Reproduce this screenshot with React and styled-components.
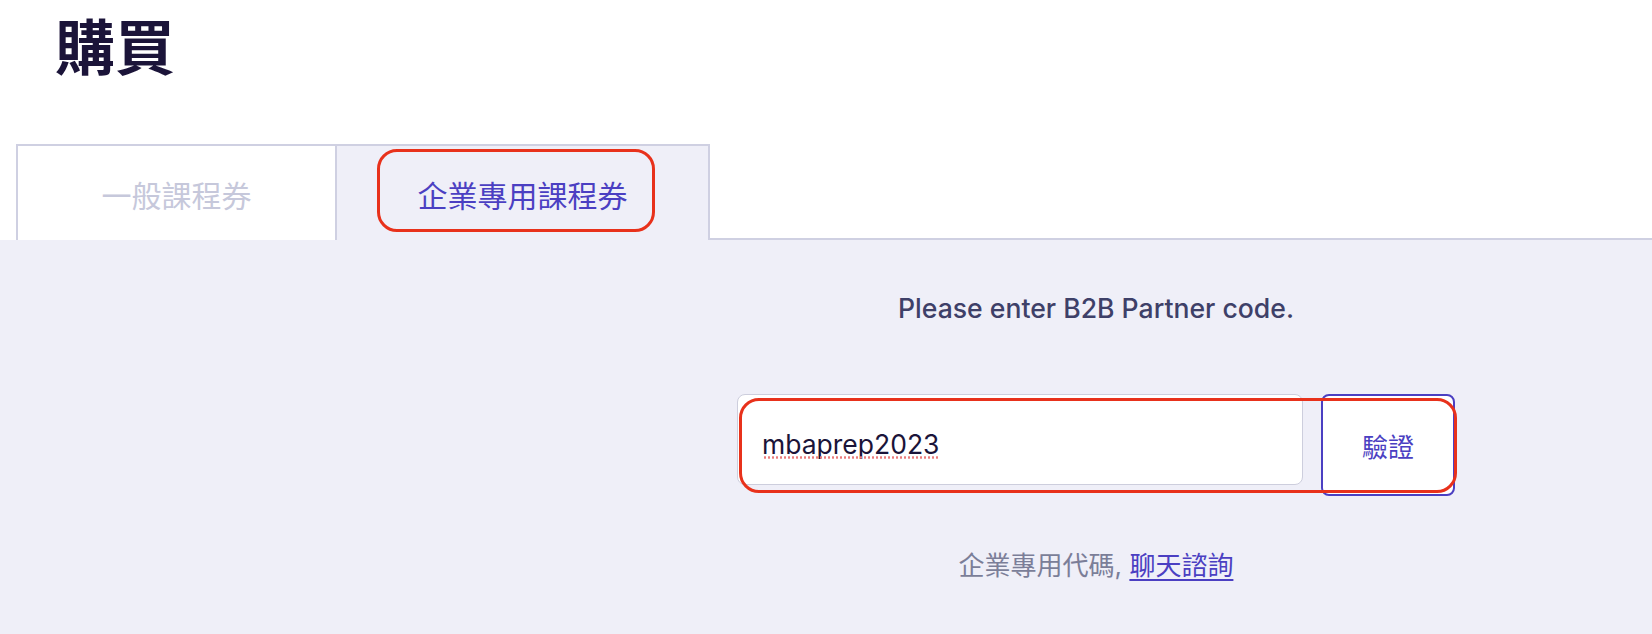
import React from "react";
import styled, { createGlobalStyle } from "styled-components";

const GlobalStyle = createGlobalStyle`
  html, body { margin: 0; padding: 0; background: #ffffff; }
  body { font-family: Inter, "Noto Sans CJK TC", sans-serif; }
  * { box-sizing: border-box; }
`;

const Page = styled.div`
  width: 1652px;
  height: 634px;
  display: flex;
  flex-direction: column;
  overflow: hidden;
`;

const Title = styled.h1`
  margin: 0;
  padding: 0 0 0 55px;
  height: 144px;
  font-family: "Noto Sans CJK TC", sans-serif;
  font-size: 60px;
  line-height: normal;
  font-weight: 700;
  color: #1b1439;
`;

const TabBar = styled.div`
  display: flex;
  padding-left: 16px;
  height: 96px;
`;

const Tab = styled.div`
  position: relative;
  width: ${(p) => p.$w}px;
  margin-left: ${(p) => (p.$first ? 0 : -2)}px;
  border: 2px solid #cfd0e2;
  border-bottom: none;
  background: ${(p) => (p.$active ? "#efeff8" : "#ffffff")};
  color: ${(p) => (p.$active ? "#4b3fc2" : "#c6c8db")};
  display: flex;
  align-items: center;
  justify-content: center;
  font-family: "Noto Sans CJK TC", sans-serif;
  font-size: 30px;
  padding-top: 2px;
`;

const TabFiller = styled.div`
  flex: 1;
  border-bottom: 2px solid #cfd0e2;
`;

const Highlight = styled.div`
  position: absolute;
  left: ${(p) => p.$l}px;
  top: ${(p) => p.$t}px;
  width: ${(p) => p.$w}px;
  height: ${(p) => p.$h}px;
  border: 3px solid #e8311b;
  border-radius: 20px;
  pointer-events: none;
`;

const Panel = styled.div`
  flex: 1;
  background: #efeff8;
  display: grid;
  grid-template-columns: 540px 1fr;
`;

const Form = styled.div`
  grid-column: 2;
  display: flex;
  flex-direction: column;
  align-items: center;
  padding-top: 52px;
`;

const Prompt = styled.p`
  margin: 0;
  font-size: 26.6px;
  line-height: 32px;
  font-weight: 500;
  color: #3e4068;
`;

const Row = styled.div`
  position: relative;
  margin-top: 70px;
  display: flex;
  align-items: flex-start;
  gap: 18px;
`;

const CodeInput = styled.input`
  width: 566px;
  height: 91px;
  border: 1.5px solid #cdcedd;
  border-radius: 8px;
  background: #ffffff;
  padding: 8px 24px 0;
  font-family: Inter, sans-serif;
  font-size: 26.5px;
  color: #1b1439;
  outline: none;
`;

const SpellMark = styled.span`
  position: absolute;
  left: 26px;
  top: 62px;
  width: 176px;
  height: 3px;
  background-image: radial-gradient(circle, #ea7b7b 1px, transparent 1.4px);
  background-size: 4px 3px;
  background-repeat: repeat-x;
  pointer-events: none;
`;

const VerifyButton = styled.button`
  width: 134px;
  height: 102px;
  border: 2px solid #4b3fc2;
  border-radius: 8px;
  background: #ffffff;
  color: #4b3fc2;
  font-family: "Noto Sans CJK TC", sans-serif;
  font-size: 26px;
  padding: 0;
  cursor: pointer;
`;

const Footer = styled.p`
  margin: 54px 0 0;
  font-family: Inter, "Noto Sans CJK TC", sans-serif;
  font-size: 26px;
  line-height: 32px;
  color: #7b7e98;
`;

const Link = styled.a`
  color: #4b3fc2;
  text-decoration: underline;
  text-underline-offset: 4px;
`;

export default function App() {
  return (
    <>
      <GlobalStyle />
      <Page>
        <Title>購買</Title>
        <TabBar>
          <Tab $first $w={321}>一般課程券</Tab>
          <Tab $active $w={375}>
            企業專用課程券
            <Highlight $l={40} $t={3} $w={278} $h={83} />
          </Tab>
          <TabFiller />
        </TabBar>
        <Panel>
          <Form>
            <Prompt>Please enter B2B Partner code.</Prompt>
            <Row>
              <CodeInput defaultValue="mbaprep2023" spellCheck={false} />
              <SpellMark />
              <VerifyButton>驗證</VerifyButton>
              <Highlight $l={2} $t={4} $w={718} $h={95} />
            </Row>
            <Footer>
              企業專用代碼, <Link href="#">聊天諮詢</Link>
            </Footer>
          </Form>
        </Panel>
      </Page>
    </>
  );
}
